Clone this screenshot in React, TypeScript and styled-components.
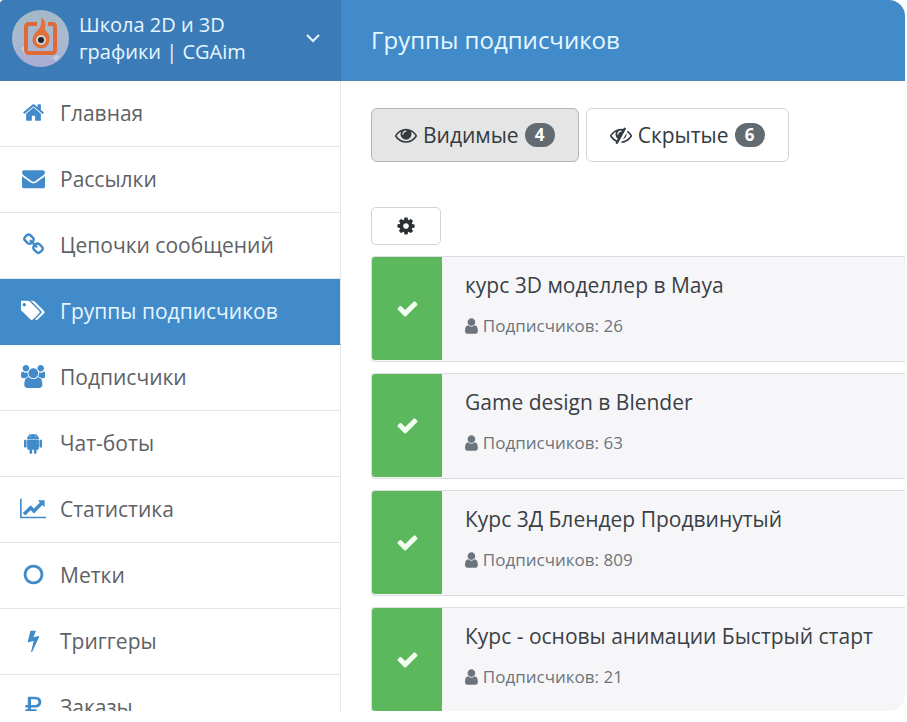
import React from "react";
import styled, { createGlobalStyle } from "styled-components";

const GlobalStyle = createGlobalStyle`
  *, *::before, *::after { box-sizing: border-box; }
  body {
    margin: 0;
    background: #fff;
    font-family: "Open Sans", "Noto Sans", sans-serif;
    color: #333a40;
  }
  button { font: inherit; color: inherit; cursor: pointer; }
`;

type IconShape = { width: number; d: string };

const icons = {
  home: {
    width: 1792,
    d: "M1472 992v480q0 26-19 45t-45 19h-384v-384h-256v384h-384q-26 0-45-19t-19-45v-480q0-1 .5-3t.5-3l575-474 575 474q1 2 1 6zm223-69l-62 74q-8 9-21 11h-3q-13 0-21-7l-692-577-692 577q-12 8-24 7-13-2-21-11l-62-74q-8-10-7-23.5t11-21.5l719-599q32-26 76-26t76 26l244 204v-195q0-14 9-23t23-9h192q14 0 23 9t9 23v408l219 182q10 8 11 21.5t-7 23.5z",
  },
  envelope: {
    width: 1792,
    d: "M1792 710v794q0 66-47 113t-113 47h-1472q-66 0-113-47t-47-113v-794q44 49 101 87 362 246 497 345 57 42 92.5 65.5t94.5 48 110 24.5h2q51 0 110-24.5t94.5-48 92.5-65.5q170-123 498-345 57-39 100-87zm0-294q0 79-49 151t-122 123q-376 261-468 325-10 7-42.5 31t-54 38.5-52 32.5-57.5 27-50 9h-2q-23 0-50-9t-57.5-27-52-32.5-54-38.5-42.5-31q-91-64-262-182.5t-205-142.5q-62-42-117-115.5t-55-136.5q0-78 41.5-130t118.5-52h1472q65 0 112.5 47t47.5 113z",
  },
  link: {
    width: 1792,
    d: "M1520 1216q0-40-28-68l-208-208q-28-28-68-28-42 0-72 32 3 3 19 18.5t21.5 21.5 15 19 13 25.5 3.5 27.5q0 40-28 68t-68 28q-15 0-27.5-3.5t-25.5-13-19-15-21.5-21.5-18.5-19q-33 31-33 73 0 40 28 68l206 207q27 27 68 27 40 0 68-26l147-146q28-28 28-67zm-703-705q0-40-28-68l-206-207q-28-28-68-28-39 0-68 27l-147 146q-28 28-28 67 0 40 28 68l208 208q27 27 68 27 42 0 72-31-3-3-19-18.5t-21.5-21.5-15-19-13-25.5-3.5-27.5q0-40 28-68t68-28q15 0 27.5 3.5t25.5 13 19 15 21.5 21.5 18.5 19q33-31 33-73zm895 705q0 120-85 203l-147 146q-83 83-203 83-121 0-204-85l-206-207q-83-83-83-203 0-123 88-209l-88-88q-86 88-208 88-120 0-204-84l-208-208q-84-84-84-204t85-203l147-146q83-83 203-83 121 0 204 85l206 207q83 83 83 203 0 123-88 209l88 88q86-88 208-88 120 0 204 84l208 208q84 84 84 204z",
  },
  tags: {
    width: 1835,
    d: "M384 448q0-53-37.5-90.5t-90.5-37.5-90.5 37.5-37.5 90.5 37.5 90.5 90.5 37.5 90.5-37.5 37.5-90.5zm1067 576q0 53-37 90l-491 492q-39 37-91 37-53 0-90-37l-715-716q-38-37-64.5-101t-26.5-117v-416q0-52 38-90t90-38h416q53 0 117 26.5t102 64.5l715 714q37 39 37 91zm384 0q0 53-37 90l-491 492q-39 37-91 37-36 0-59-14t-53-45l470-470q37-37 37-90 0-52-37-91l-715-714q-38-38-102-64.5t-117-26.5h224q53 0 117 26.5t102 64.5l715 714q37 39 37 91z",
  },
  users: {
    width: 1920,
    d: "M593 896q-162 5-265 128h-134q-82 0-138-40.5t-56-118.5q0-353 124-353 6 0 43.5 21t97.5 42.5 119 21.5q67 0 133-23-5 37-5 66 0 139 81 256zm1071 637q0 120-73 189.5t-194 69.5h-874q-121 0-194-69.5t-73-189.5q0-53 3.5-103.5t14-109 26.5-108.5 43-97.5 62-81 85.5-53.5 111.5-20q10 0 43 21.5t73 48 107 48 135 21.5 135-21.5 107-48 73-48 43-21.5q61 0 111.5 20t85.5 53.5 62 81 43 97.5 26.5 108.5 14 109 3.5 103.5zm-1024-1277q0 106-75 181t-181 75-181-75-75-181 75-181 181-75 181 75 75 181zm704 384q0 159-112.5 271.5t-271.5 112.5-271.5-112.5-112.5-271.5 112.5-271.5 271.5-112.5 271.5 112.5 112.5 271.5zm576 225q0 78-56 118.5t-138 40.5h-134q-103-123-265-128 81-117 81-256 0-29-5-66 66 23 133 23 59 0 119-21.5t97.5-42.5 43.5-21q124 0 124 353zm-128-609q0 106-75 181t-181 75-181-75-75-181 75-181 181-75 181 75 75 181z",
  },
  android: {
    width: 1408,
    d: "M493 483q16 0 27.5-11.5t11.5-27.5-11.5-27.5-27.5-11.5-27 11.5-11 27.5 11 27.5 27 11.5zm422 0q16 0 27-11.5t11-27.5-11-27.5-27-11.5-27.5 11.5-11.5 27.5 11.5 27.5 27.5 11.5zm-812 184q42 0 72 30t30 72v430q0 43-29.5 73t-72.5 30-73-30-30-73v-430q0-42 30-72t73-30zm1060 19v666q0 46-32 78t-77 32h-75v227q0 43-30 73t-73 30-73-30-30-73v-227h-138v227q0 43-30 73t-73 30q-42 0-72-30t-30-73l-1-227h-74q-46 0-78-32t-32-78v-666h918zm-232-405q107 55 171 153.5t64 215.5h-925q0-117 64-215.5t172-153.5l-71-131q-7-13 5-20 13-6 20 6l72 132q95-42 201-42t201 42l72-132q7-12 20-6 12 7 5 20zm477 488v430q0 43-30 73t-73 30q-42 0-72-30t-30-73v-430q0-43 30-72.5t72-29.5q43 0 73 29.5t30 72.5z",
  },
  chart: {
    width: 2048,
    d: "M2048 1536v128h-2048v-1536h128v1408h1920zm-128-1248v435q0 21-19.5 29.5t-35.5-7.5l-121-121-633 633q-10 10-23 10t-23-10l-233-233-416 416-192-192 585-585q10-10 23-10t23 10l233 233 464-464-121-121q-16-16-7.5-35.5t29.5-19.5h435q14 0 23 9t9 23z",
  },
  circle: {
    width: 1792,
    d: "M896 352q-148 0-273 73t-198 198-73 273 73 273 198 198 273 73 273-73 198-198 73-273-73-273-198-198-273-73zm768 544q0 209-103 385.5t-279.5 279.5-385.5 103-385.5-103-279.5-279.5-103-385.5 103-385.5 279.5-279.5 385.5-103 385.5 103 279.5 279.5 103 385.5z",
  },
  bolt: {
    width: 1792,
    d: "M1333 566q18 20 7 44l-540 1157q-13 25-42 25-4 0-14-2-17-5-25.5-19t-4.5-30l197-808-406 101q-4 1-12 1-18 0-31-11-18-15-13-39l201-825q4-14 16-23t28-9h328q19 0 32 12.5t13 29.5q0 8-5 18l-171 463 396-98q8-2 12-2 19 0 34 15z",
  },
  ruble: {
    width: 1792,
    d: "M500 128h580q190 0 310 118t120 304-120 304-310 118H700v130h440v164H700v350q0 48-48 48H500q-48 0-48-48v-350H290q-34 0-34-34v-96q0-34 34-34h162V972H290q-34 0-34-34V806q0-34 34-34h162V176q0-48 48-48zm200 204v440h358q98 0 158-62t60-160-60-158-158-60z",
  },
  eye: {
    width: 1792,
    d: "M1664 960q-152-236-381-353 61 104 61 225 0 185-131.5 316.5t-316.5 131.5-316.5-131.5-131.5-316.5q0-121 61-225-229 117-381 353 133 205 333.5 326.5t434.5 121.5 434.5-121.5 333.5-326.5zm-720-384q0-20-14-34t-34-14q-125 0-214.5 89.5t-89.5 214.5q0 20 14 34t34 14 34-14 14-34q0-86 61-147t147-61q20 0 34-14t14-34zm848 384q0 34-20 69-140 230-376.5 368.5t-499.5 138.5-499.5-139-376.5-368q-20-35-20-69t20-69q140-229 376.5-368t499.5-139 499.5 139 376.5 368q20 35 20 69z",
  },
  eyeSlash: {
    width: 1792,
    d: "M555 1335l78-141q-87-63-136-159t-49-203q0-121 61-225-229 117-381 353 167 258 427 375zm389-759q0-20-14-34t-34-14q-125 0-214.5 89.5t-89.5 214.5q0 20 14 34t34 14 34-14 14-34q0-86 61-147t147-61q20 0 34-14t14-34zm363-191q0 7-1 9-106 189-316 567t-315 566l-49 89q-10 16-28 16-12 0-134-70-16-10-16-28 0-12 44-87-143-65-263.5-173t-208.5-245q-20-31-20-69t20-69q153-235 380-371t496-136q89 0 180 17l54-97q10-16 28-16 5 0 18 6t31 15.5 33 18.5 31.5 18.5 19.5 11.5q16 10 16 27zm37 447q0 139-79 253.5t-209 164.5l280-502q8 45 8 84zm448 128q0 35-20 69-39 64-109 145-150 172-347.5 267t-419.5 95l74-132q212-18 392.5-137t301.5-307q-115-179-282-294l63-112q95 64 182.5 153t144.5 184q20 34 20 69z",
  },
  cog: {
    width: 1792,
    d: "M1152 896q0-106-75-181t-181-75-181 75-75 181 75 181 181 75 181-75 75-181zm512-109v222q0 12-8 23t-20 13l-185 28q-19 54-39 91 35 50 107 138 10 12 10 25t-9 23q-27 37-99 108t-94 71q-12 0-26-9l-138-108q-44 23-91 38-16 136-29 186-7 28-36 28h-222q-14 0-24.5-8.5t-11.5-21.5l-28-184q-49-16-90-37l-141 107q-10 9-25 9-14 0-25-11-126-114-165-168-7-10-7-23 0-12 8-23 15-21 51-66.5t54-70.5q-27-50-41-99l-183-27q-13-2-21-12.5t-8-23.5v-222q0-12 8-23t19-13l186-28q14-46 39-92-40-57-107-138-10-12-10-24 0-10 9-23 26-36 98.5-107.5t94.5-71.5q13 0 26 10l138 107q44-23 91-38 16-136 29-186 7-28 36-28h222q14 0 24.5 8.5t11.5 21.5l28 184q49 16 90 37l142-107q9-9 24-9 13 0 25 10 129 119 165 170 7 8 7 22 0 12-8 23-15 21-51 66.5t-54 70.5q26 50 41 98l183 28q13 2 21 12.5t8 23.5z",
  },
  check: {
    width: 1792,
    d: "M1671 566q0 40-28 68l-724 724-136 136q-28 28-68 28t-68-28l-136-136-362-362q-28-28-28-68t28-68l136-136q28-28 68-28t68 28l294 295 656-657q28-28 68-28t68 28l136 136q28 28 28 68z",
  },
  user: {
    width: 1280,
    d: "M1280 1399q0 109-62.5 187t-150.5 78h-854q-88 0-150.5-78t-62.5-187q0-85 8.5-160.5t31.5-152 58.5-131 94-89 134.5-34.5q131 128 313 128t313-128q76 0 134.5 34.5t94 89 58.5 131 31.5 152 8.5 160.5zm-256-887q0 159-112.5 271.5t-271.5 112.5-271.5-112.5-112.5-271.5 112.5-271.5 271.5-112.5 271.5 112.5 112.5 271.5z",
  },
} satisfies Record<string, IconShape>;

type IconName = keyof typeof icons;

const Glyph = styled.svg<{ $size: number }>`
  display: block;
  flex: none;
  height: ${(p) => p.$size}px;
  fill: currentColor;
`;

function Icon({ name, size }: { name: IconName; size: number }) {
  const { width, d } = icons[name];
  return (
    <Glyph $size={size} viewBox={`0 0 ${width} 1792`} aria-hidden="true">
      <path d={d} />
    </Glyph>
  );
}

const Frame = styled.div`
  display: grid;
  grid-template-columns: 341px minmax(0, 1fr);
  height: calc(100vh - 11px);
  margin-right: 2px;
  overflow: hidden;
  border-radius: 4px 16px 16px 4px;
`;

const Sidebar = styled.aside`
  min-width: 0;
`;

const Account = styled.button`
  display: flex;
  align-items: center;
  gap: 10px;
  width: 100%;
  height: 81px;
  padding: 0 20px 4px 12px;
  border: 0;
  border-bottom: 1px solid #4a7ba6;
  background: #3b7cb8;
  color: #e6f6ff;
  font-size: 20px;
  line-height: 27px;
  text-align: left;
`;

const AccountName = styled.span`
  flex: 1;
`;

const Avatar = styled.svg`
  flex: none;
  width: 57px;
  height: 57px;
`;

const Chevron = styled.svg`
  flex: none;
  width: 16px;
  height: 16px;
  fill: none;
  stroke: currentColor;
  stroke-width: 2;
`;

const MenuLink = styled.a<{ $active?: boolean }>`
  display: grid;
  grid-template-columns: 26px 1fr;
  align-items: center;
  gap: 14px;
  height: 66px;
  padding: 0 0 2px 20px;
  border-right: 1px solid #e6e7e9;
  border-bottom: 1px solid ${(p) => (p.$active ? "#428bca" : "#e4e5e7")};
  background: ${(p) => (p.$active ? "#428bca" : "#fff")};
  color: ${(p) => (p.$active ? "#e6f6ff" : "#5e6166")};
  font-size: 21px;
  line-height: 30px;
  text-decoration: none;
`;

const MenuIcon = styled.span<{ $active?: boolean }>`
  display: flex;
  justify-content: center;
  color: ${(p) => (p.$active ? "#fff" : "#428bca")};
`;

const Main = styled.main`
  min-width: 0;
`;

const TitleBar = styled.header`
  display: flex;
  align-items: center;
  height: 81px;
  padding-left: 30px;
  border-bottom: 1px solid #5088b8;
  background: #428bca;
`;

const Title = styled.h1`
  margin: 0;
  color: #e6f8ff;
  font-size: 24px;
  font-weight: 500;
  line-height: 32px;
`;

const Content = styled.div`
  padding: 27px 0 0 30px;
`;

const Filters = styled.div`
  display: flex;
  gap: 7px;
  margin-bottom: 45px;
`;

const FilterButton = styled.button<{ $active?: boolean }>`
  display: flex;
  align-items: center;
  gap: 6px;
  height: 54px;
  padding: 0 23px;
  border: 1px solid ${(p) => (p.$active ? "#b4b5b7" : "#d2d4d6")};
  border-radius: 6px;
  background: ${(p) => (p.$active ? "#e5e5e5" : "#fff")};
  font-size: 21px;
  line-height: 30px;
`;

const Count = styled.span`
  min-width: 30px;
  border-radius: 12px;
  background: #636b72;
  color: #fff;
  font-size: 17px;
  font-weight: 700;
  line-height: 24px;
  text-align: center;
`;

const SettingsButton = styled.button`
  display: flex;
  align-items: center;
  justify-content: center;
  width: 70px;
  height: 38px;
  margin-bottom: 11px;
  padding: 0;
  border: 1px solid #d2d4d6;
  border-radius: 5px;
  background: #fff;
  color: #2b2f33;
`;

const GroupList = styled.ul`
  display: grid;
  gap: 11px;
  margin: 0;
  padding: 0;
  list-style: none;
`;

const GroupCard = styled.li`
  display: grid;
  grid-template-columns: 70px minmax(0, 1fr);
  height: 106px;
  padding-bottom: 1px;
  border: 1px solid #dcdde0;
  border-right: 0;
  border-radius: 4px 0 0 4px;
  background: #f6f6f9;
`;

const Mark = styled.span`
  display: flex;
  align-items: center;
  justify-content: center;
  border-radius: 3px 0 0 3px;
  background: #5cb85c;
  color: #f2fff0;
`;

const GroupInfo = styled.div`
  padding: 13px 0 0 23px;
`;

const GroupName = styled.h2`
  margin: 0 0 14px;
  color: #3a3f45;
  font-size: 21px;
  font-weight: 400;
  line-height: 30px;
  white-space: nowrap;
`;

const Subscribers = styled.p`
  display: flex;
  align-items: center;
  gap: 5px;
  margin: 0;
  color: #6c757d;
  font-size: 17px;
  line-height: 24px;
`;

const menu: { icon: IconName; label: string; active?: boolean }[] = [
  { icon: "home", label: "Главная" },
  { icon: "envelope", label: "Рассылки" },
  { icon: "link", label: "Цепочки сообщений" },
  { icon: "tags", label: "Группы подписчиков", active: true },
  { icon: "users", label: "Подписчики" },
  { icon: "android", label: "Чат-боты" },
  { icon: "chart", label: "Статистика" },
  { icon: "circle", label: "Метки" },
  { icon: "bolt", label: "Триггеры" },
  { icon: "ruble", label: "Заказы" },
];

const groups = [
  { name: "курс 3D моделлер в Maya", count: 26 },
  { name: "Game design в Blender", count: 63 },
  { name: "Курс 3Д Блендер Продвинутый", count: 809 },
  { name: "Курс - основы анимации Быстрый старт", count: 21 },
];

function SchoolLogo() {
  return (
    <Avatar viewBox="0 0 57 57" aria-hidden="true">
      <defs>
        <linearGradient id="sky" x1="0" y1="0" x2="0" y2="1">
          <stop offset="0" stopColor="#a3b9c6" />
          <stop offset="0.5" stopColor="#a9bad0" />
          <stop offset="1" stopColor="#a9acd2" />
        </linearGradient>
      </defs>
      <circle cx="28.5" cy="28.5" r="28.5" fill="url(#sky)" />
      <path d="M9 38l5-3 3 5-4 5zM40 48l4-3 4 1-4 5z" fill="#c3cce2" />
      <path
        d="M25 14H17Q14 14 14 17V40Q14 43 17 43H40Q43 43 43 40V17Q43 14 40 14H36"
        fill="none"
        stroke="#dd6a38"
        strokeWidth="4"
      />
      <path
        d="M29 7Q35 12 33 17Q32 20 35 22Q38 25 37.500 30A8.500 8.500 0 0 1 20.500 30Q20.500 25 25 21Q31 16 29 7Z"
        fill="#e2703a"
      />
      <circle cx="29" cy="30" r="5" fill="#d8cfd0" />
      <circle cx="29" cy="30" r="3" fill="#20242b" />
    </Avatar>
  );
}

export default function App() {
  return (
    <>
      <GlobalStyle />
      <Frame>
        <Sidebar>
          <Account type="button">
            <SchoolLogo />
            <AccountName>
              Школа 2D и 3D
              <br />
              графики | CGAim
            </AccountName>
            <Chevron viewBox="0 0 16 16" aria-hidden="true">
              <path d="M2 5l6 6 6-6" />
            </Chevron>
          </Account>
          <nav>
            {menu.map(({ icon, label, active }) => (
              <MenuLink
                key={label}
                href="#"
                $active={active}
                aria-current={active ? "page" : undefined}
              >
                <MenuIcon $active={active}>
                  <Icon name={icon} size={23} />
                </MenuIcon>
                {label}
              </MenuLink>
            ))}
          </nav>
        </Sidebar>
        <Main>
          <TitleBar>
            <Title>Группы подписчиков</Title>
          </TitleBar>
          <Content>
            <Filters>
              <FilterButton type="button" $active aria-pressed="true">
                <Icon name="eye" size={22} />
                Видимые
                <Count>4</Count>
              </FilterButton>
              <FilterButton type="button" aria-pressed="false">
                <Icon name="eyeSlash" size={22} />
                Скрытые
                <Count>6</Count>
              </FilterButton>
            </Filters>
            <SettingsButton type="button" aria-label="Настройки">
              <Icon name="cog" size={20} />
            </SettingsButton>
            <GroupList>
              {groups.map(({ name, count }) => (
                <GroupCard key={name}>
                  <Mark>
                    <Icon name="check" size={23} />
                  </Mark>
                  <GroupInfo>
                    <GroupName>{name}</GroupName>
                    <Subscribers>
                      <Icon name="user" size={18} />
                      Подписчиков: {count}
                    </Subscribers>
                  </GroupInfo>
                </GroupCard>
              ))}
            </GroupList>
          </Content>
        </Main>
      </Frame>
    </>
  );
}
